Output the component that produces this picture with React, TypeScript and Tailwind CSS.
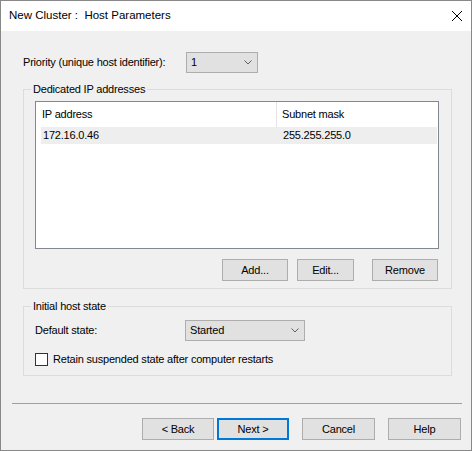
function Chevron() {
  return (
    <svg width="8" height="5" viewBox="0 0 8 5" className="shrink-0">
      <path d="M0.5 0.5 L4 4 L7.5 0.5" fill="none" stroke="#606060" strokeWidth="1" />
    </svg>
  )
}

function Combo({ value, width }: { value: string; width: string }) {
  return (
    <div className={`${width} flex h-[21px] items-center justify-between border border-[#adadad] bg-[#e1e1e1] pl-[4px] pr-[5px]`}>
      <span>{value}</span>
      <Chevron />
    </div>
  )
}

function Btn({ label, width, primary }: { label: string; width: string; primary?: boolean }) {
  return (
    <div
      className={`${width} flex h-[22px] items-center justify-center bg-[#e1e1e1] ${
        primary ? 'border-2 border-[#0078d7]' : 'border border-[#adadad]'
      }`}
    >
      {label}
    </div>
  )
}

function GroupBox({ title, className, children }: { title: string; className: string; children: React.ReactNode }) {
  return (
    <div className={`relative ml-[22px] w-[429px] border border-[#dcdcdc] ${className}`}>
      {/* group caption sits over the top border */}
      <span className="absolute -top-[8px] left-[7px] bg-[#f0f0f0] px-[2px] leading-[14px]">{title}</span>
      {children}
    </div>
  )
}

export default function App() {
  return (
    <div
      className="flex h-[451px] w-[472px] flex-col border border-[#888888] text-[11px] tracking-[-0.2px] text-black"
      style={{ fontFamily: '"Liberation Sans", Arial, sans-serif' }}
    >
      {/* Title bar */}
      <div className="flex h-[30px] shrink-0 items-center justify-between bg-white pl-[8px] pr-[9px]">
        <span className="text-[11.5px] tracking-normal">New Cluster :&nbsp; Host Parameters</span>
        <svg width="10" height="10" viewBox="0 0 10 10">
          <path d="M0 0 L10 10 M10 0 L0 10" stroke="#000" strokeWidth="1" />
        </svg>
      </div>

      {/* Body */}
      <div className="flex flex-1 flex-col bg-[#f0f0f0]">
        <div className="ml-[22px] mt-[21px] flex items-center">
          <span className="w-[163px]">Priority (unique host identifier):</span>
          <Combo value="1" width="w-[72px]" />
        </div>

        <GroupBox title="Dedicated IP addresses" className="mt-[16px] pb-[7px] pl-[11px] pr-[12px] pt-[11px]">
          <div className="h-[148px] border border-[#828790] bg-white">
            <div className="flex h-[25px] items-center">
              <div className="flex h-full w-[241px] items-center border-r border-[#e5e5e5] pl-[6px]">IP address</div>
              <div className="flex h-full flex-1 items-center pl-[5px]">Subnet mask</div>
            </div>
            <div className="ml-[5px] mr-[1px] flex h-[17px] items-center bg-[#eeeeee]">
              <div className="w-[236px] pl-[2px]">172.16.0.46</div>
              <div className="pl-[6px]">255.255.255.0</div>
            </div>
          </div>
          <div className="mr-[1px] mt-[10px] flex justify-end">
            <Btn label="Add..." width="w-[66px]" />
            <div className="ml-[9px]">
              <Btn label="Edit..." width="w-[57px]" />
            </div>
            <div className="ml-[18px]">
              <Btn label="Remove" width="w-[66px]" />
            </div>
          </div>
        </GroupBox>

        <GroupBox title="Initial host state" className="mt-[17px] pb-[9px] pl-[11px] pt-[13px]">
          <div className="flex items-center">
            <span className="w-[150px]">Default state:</span>
            <Combo value="Started" width="w-[120px]" />
          </div>
          <div className="mt-[12px] flex h-[13px] items-center leading-[13px]">
            <div className="h-[13px] w-[13px] border border-[#333333] bg-white" />
            <span className="ml-[5px]">Retain suspended state after computer restarts</span>
          </div>
        </GroupBox>

        <div className="ml-[11px] mt-[27px] h-px w-[450px] bg-[#a0a0a0]" />

        <div className="ml-[141px] mt-[14px] flex">
          <Btn label="< Back" width="w-[72px]" />
          <div className="ml-[3px]">
            <Btn label="Next >" width="w-[72px]" primary />
          </div>
          <div className="ml-[13px]">
            <Btn label="Cancel" width="w-[73px]" />
          </div>
          <div className="ml-[13px]">
            <Btn label="Help" width="w-[73px]" />
          </div>
        </div>
      </div>
    </div>
  )
}
